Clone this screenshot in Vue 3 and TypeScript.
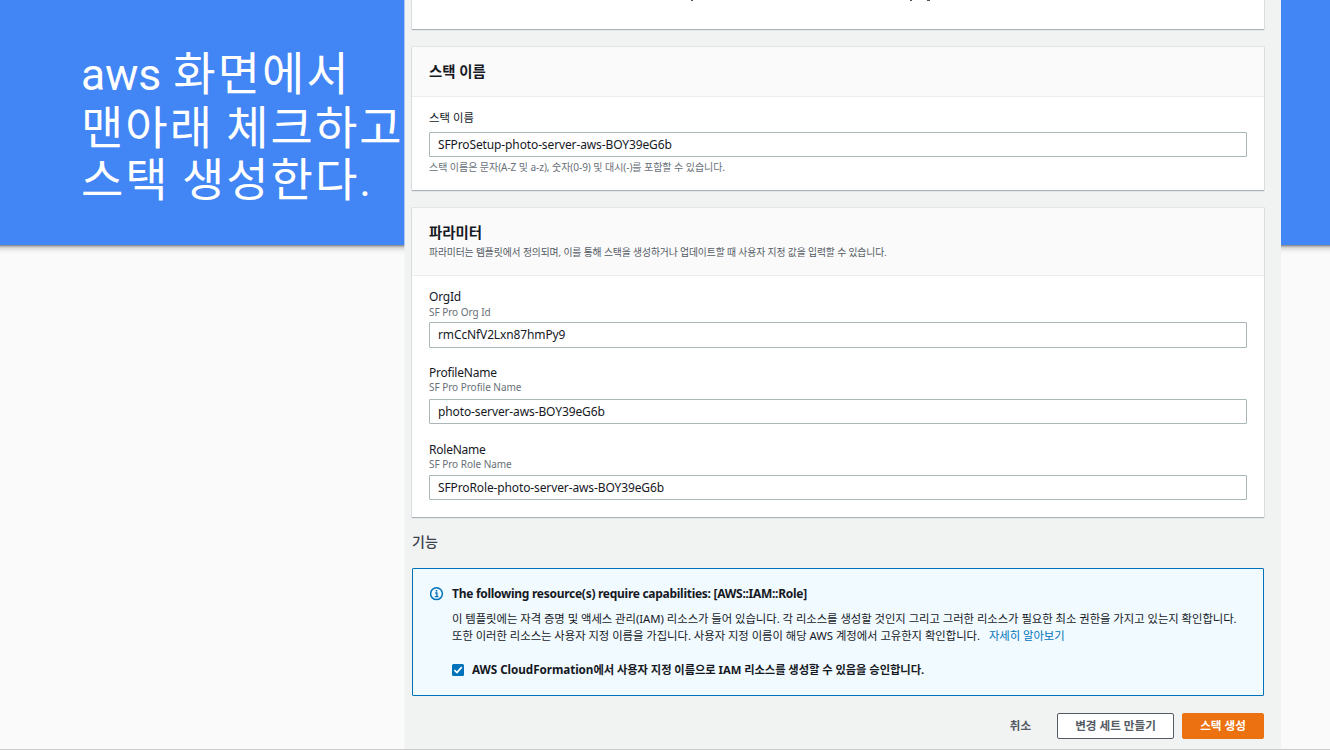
<script setup lang="ts">
interface Field {
  id: string
  label: string
  hint: string
  value: string
}

const fields: Field[] = [
  { id: 'org', label: 'OrgId', hint: 'SF Pro Org Id', value: 'rmCcNfV2Lxn87hmPy9' },
  { id: 'profile', label: 'ProfileName', hint: 'SF Pro Profile Name', value: 'photo-server-aws-BOY39eG6b' },
  { id: 'role', label: 'RoleName', hint: 'SF Pro Role Name', value: 'SFProRole-photo-server-aws-BOY39eG6b' },
]
</script>

<template>
  <div class="slide">
    <header class="banner">
      <h1 class="title"><span class="latin">aws</span> 화면에서<br />맨아래 체크하고<br />스택 생성한다<span class="latin">.</span></h1>
    </header>

    <main class="console">
      <section class="card card-top">
        <i class="tail tail-a"></i><i class="tail tail-b"></i><i class="tail tail-c"></i>
      </section>

      <section class="card card-name">
        <div class="card-head"><h2>스택 이름</h2></div>
        <div class="card-body">
          <div class="label ko">스택 이름</div>
          <div class="input">SFProSetup-photo-server-aws-BOY39eG6b</div>
          <div class="note">스택 이름은 문자(A-Z 및 a-z), 숫자(0-9) 및 대시(-)를 포함할 수 있습니다.</div>
        </div>
      </section>

      <section class="card card-params">
        <div class="card-head">
          <h2>파라미터</h2>
          <p>파라미터는 템플릿에서 정의되며, 이를 통해 스택을 생성하거나 업데이트할 때 사용자 지정 값을 입력할 수 있습니다.</p>
        </div>
        <div class="card-body">
          <div v-for="f in fields" :key="f.id" class="field" :class="f.id">
            <div class="label">{{ f.label }}</div>
            <div class="hint">{{ f.hint }}</div>
            <div class="input">{{ f.value }}</div>
          </div>
        </div>
      </section>

      <h3 class="section-title">기능</h3>

      <section class="alert">
        <svg class="info" viewBox="0 0 14 14" width="14" height="14" fill="none" stroke="#0073bb">
          <circle cx="6.5" cy="6.7" r="5.9" stroke-width="1.5" />
          <path d="M5.2 6h1.7v3.4M4.8 9.6h3.7" stroke-width="1.4" />
          <path d="M5.7 3.8h1.6" stroke-width="1.6" />
        </svg>
        <div class="alert-content">
          <div class="alert-title">The following resource(s) require capabilities: [AWS::IAM::Role]</div>
          <p class="alert-text">이 템플릿에는 자격 증명 및 액세스 관리(IAM) 리소스가 들어 있습니다. 각 리소스를 생성할 것인지 그리고 그러한 리소스가 필요한 최소 권한을 가지고 있는지 확인합니다.</p>
          <p class="alert-text">또한 이러한 리소스는 사용자 지정 이름을 가집니다. 사용자 지정 이름이 해당 AWS 계정에서 고유한지 확인합니다.<a class="link">자세히 알아보기</a></p>
          <div class="ack">
            <svg class="check" viewBox="0 0 12 12" width="12" height="12">
              <rect width="12" height="12" rx="1.5" fill="#0073bb" />
              <path d="M2.4 6.1 5 8.6 9.7 3.1" fill="none" stroke="#fff" stroke-width="1.7" />
            </svg>
            <span><span class="product">AWS CloudFormation</span>에서 사용자 지정 이름으로 IAM 리소스를 생성할 수 있음을 승인합니다.</span>
          </div>
        </div>
      </section>

      <footer class="actions">
        <span class="cancel">취소</span>
        <button class="btn change">변경 세트 만들기</button>
        <button class="btn create">스택 생성</button>
      </footer>
    </main>
  </div>
</template>

<style>
body { margin: 0; overflow: hidden; }
</style>

<style scoped>
* { box-sizing: border-box; }
h1, h2, h3, p { margin: 0; }
.slide {
  position: relative;
  width: 1330px;
  height: 750px;
  overflow: hidden;
  background: #fafafa;
  border-bottom: 1px solid #ccc;
  font-family: "Noto Sans", "Noto Sans CJK KR", sans-serif;
  color: #16191f;
  white-space: nowrap;
}
.banner {
  height: 245px;
  margin: 0 -10px;
  padding: 44px 0 0 91px;
  background: #4285f4;
  box-shadow: 0 1px 2px rgba(0, 0, 0, 0.4), 0 3px 6px rgba(0, 0, 0, 0.25);
}
.title {
  font: 400 46px/52px "Noto Sans CJK KR", sans-serif;
  letter-spacing: 2px;
  color: #fff;
}
.latin { font-family: Roboto, sans-serif; font-weight: 400; font-size: 44.5px; line-height: 1; letter-spacing: -0.2px; }
.console {
  position: absolute;
  left: 404px;
  top: 0;
  width: 877px;
  height: 749px;
  padding: 0 17px 0 7px;
  background: #f1f3f3;
  background-clip: padding-box;
  border-left: 1px solid rgba(241, 243, 243, 0.6);
  display: flex;
  flex-direction: column;
}
.card {
  flex: none;
  background: #fff;
  box-shadow: 0 1px 1px #aab4b8, 0 0 0 1px #e2e6e7, 1px 0 0 #c8cdcf, -1px 0 0 #c8cdcf;
}
.card-top { position: relative; height: 29px; margin-bottom: 18px; }
.card-name { height: 143px; margin-bottom: 18px; }
.card-params { height: 309px; }
.card-head { background: #fafafa; border-bottom: 1px solid #eaeded; padding: 0 17px; }
.card-name .card-head { height: 50px; padding-top: 14px; }
.card-params .card-head { height: 68px; padding-top: 14px; }
.tail { position: absolute; top: 0; height: 1px; background: #555; width: 2px; }
.tail-a { left: 279px; }
.tail-b { left: 498px; }
.tail-c { left: 515px; width: 3px; }
h2 { font-size: 14.4px; line-height: 22px; font-weight: 700; }
.card-head p { font-size: 9.8px; line-height: 17px; color: #545b64; letter-spacing: -0.11px; }
.card-body { padding: 0 17px; }
.card-name .card-body { padding-top: 12px; }
.card-params .card-body { padding-top: 12px; display: flex; flex-direction: column; }
.label { font-size: 12px; line-height: 17px; height: 17px; letter-spacing: -0.22px; }
.ko { margin-bottom: 6px; font-size: 11.4px; letter-spacing: 0; line-height: 18px; }
.hint { height: 17px; font-size: 10px; line-height: 13px; color: #687078; letter-spacing: -0.03px; }
.input {
  height: 25px;
  border: 1px solid #aab7b8;
  border-radius: 1px;
  padding-left: 8px;
  font-size: 12px;
  line-height: 24px;
  letter-spacing: -0.12px;
  background: #fff;
}
.note { font-size: 10px; line-height: 16px; margin-top: 2px; color: #687078; letter-spacing: -0.05px; }
.field { height: 76px; }
.org { height: 77px; }
.org .input { height: 26px; }
.org .hint { line-height: 14px; }
.profile .label { line-height: 15px; }
.profile .hint { line-height: 11px; }
.section-title { font-size: 14px; line-height: 22px; font-weight: 500; color: #3c424b; margin-top: 13px; font-family: "Noto Sans CJK KR", sans-serif; }
.alert {
  flex: none;
  height: 128px;
  margin-top: 16px;
  border: 1px solid #0073bb;
  border-radius: 1px;
  background: #f1faff;
  display: flex;
  padding: 16px 0 0 17px;
}
.info { margin-top: 2px; margin-right: 8px; flex: none; }
.alert-title { font-size: 12px; font-weight: 700; line-height: 18px; margin-bottom: 7px; letter-spacing: -0.28px; }
.alert-text { font-size: 11.35px; line-height: 17px; letter-spacing: -0.035px; }
.link { color: #0073bb; margin-left: 9px; }
.ack { display: flex; align-items: center; font-size: 11.3px; font-weight: 700; line-height: 18px; margin-top: 16px; letter-spacing: -0.06px; }
.product { font-size: 11.7px; }
.check { margin-right: 8px; }
.actions { display: flex; align-items: center; justify-content: flex-end; margin-top: 17px; height: 26px; }
.cancel { font-size: 11.5px; font-weight: 700; color: #545b64; margin-right: 26px; line-height: 18px; margin-bottom: 1px; }
.btn {
  height: 26px;
  padding: 0;
  font: 700 11.6px/24px "Noto Sans", "Noto Sans CJK KR", sans-serif;
  border: 1px solid #545b64;
  border-radius: 2px;
  background: #fff;
  color: #545b64;
}
.change { width: 117px; margin-right: 8px; }
.create { width: 82px; background: #ec7211; border-color: #ec7211; color: #fff; }
</style>
